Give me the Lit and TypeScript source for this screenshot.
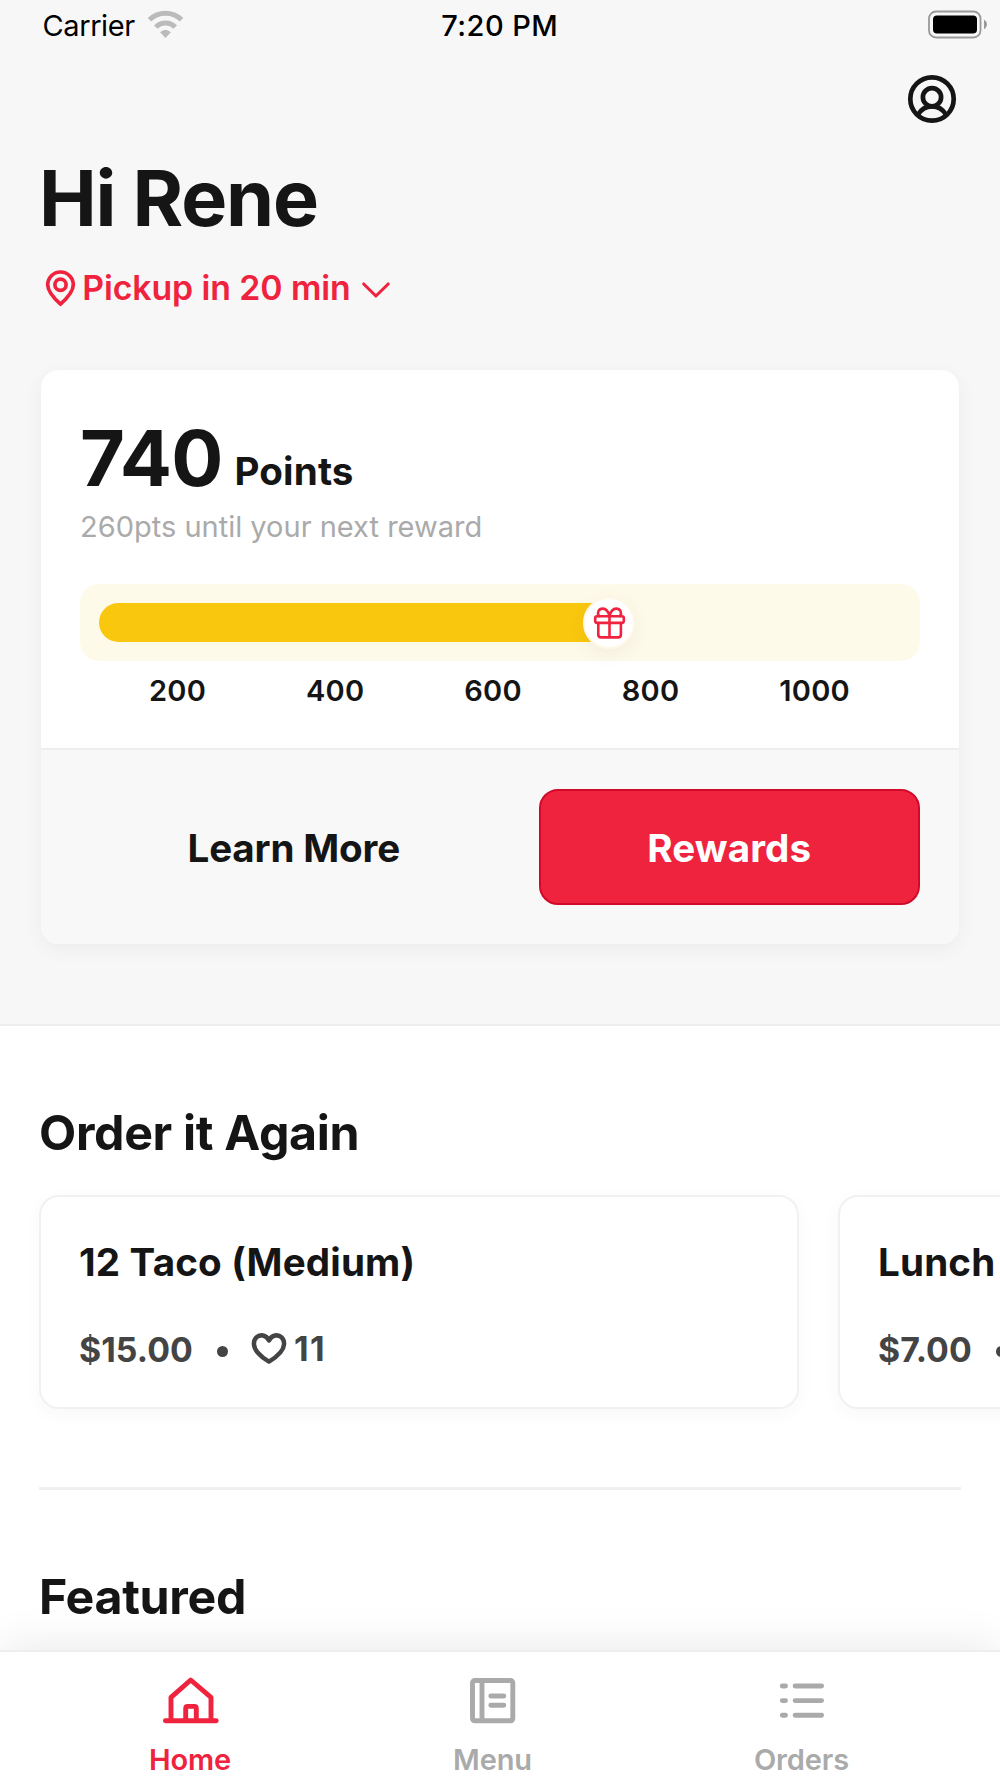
import { LitElement, html, css, svg, nothing } from "lit";
import { customElement } from "lit/decorators.js";
import { classMap } from "lit/directives/class-map.js";

interface Order {
  name: string;
  price: string;
  likes?: number;
}

const orders: Order[] = [
  { name: "12 Taco (Medium)", price: "$15.00", likes: 11 },
  { name: "Lunch", price: "$7.00" },
];

const steps = [200, 400, 600, 800, 1000];

const homeIcon = svg`
  <path d="M11 50V27.4L30.7 10L51 27.4V50M25.7 50V38.4Q25.7 36.4 27.7 36.4H34.3Q36.3 36.4 36.3 38.4V50"/>
  <path d="M5.4 50.7H56.2"/>`;

const menuIcon = svg`
  <rect x="12.5" y="10.5" width="40.3" height="40.3" rx="2.2"/>
  <path d="M22 10.5V50.5"/>
  <path d="M30.8 26H43.8M30.8 35.3H43.8"/>`;

const ordersIcon = svg`
  <path d="M12.2 16H15.4M25 16H51.5M12.2 30.6H15.4M25 30.6H51.5M12.2 45.2H15.4M25 45.2H51.5"/>`;

const tabs = [
  { label: "Home", icon: homeIcon, box: "0 0 61 61", active: true },
  { label: "Menu", icon: menuIcon, box: "2 0 61 61", active: false },
  { label: "Orders", icon: ordersIcon, box: "0.9 0 61 61", active: false },
];

@customElement("app-root")
export class AppRoot extends LitElement {
  static styles = css`
    :host {
      display: block;
      font-family: Inter, "Liberation Sans", sans-serif;
      color: #151515;
    }
    * {
      box-sizing: border-box;
    }
    svg {
      display: block;
      flex: none;
      fill: none;
      overflow: visible;
      stroke: currentColor;
      stroke-linecap: round;
      stroke-linejoin: round;
    }
    .screen {
      display: flex;
      flex-direction: column;
      height: 1778px;
      overflow: hidden;
      background: #fff;
    }

    .hero {
      flex: none;
      height: 1026px;
      background: #f7f7f7;
      border-bottom: 2px solid #eee;
    }
    .status {
      display: grid;
      grid-template-columns: 1fr auto 1fr;
      align-items: center;
      height: 50px;
      padding: 0 12px 0 42.5px;
      color: #000;
      font-size: 29px;
      line-height: 48px;
    }
    .carrier {
      display: flex;
      align-items: center;
      gap: 12px;
      letter-spacing: -0.4px;
    }
    .carrier span,
    .clock {
      padding-top: 2px;
    }
    .wifi {
      color: #bbb;
      stroke-linecap: butt;
    }
    .clock {
      font-weight: 500;
      letter-spacing: 0.45px;
      padding-right: 31px;
    }
    .battery {
      justify-self: end;
      color: #999;
    }
    .account {
      display: flex;
      justify-content: flex-end;
      padding: 25px 44px 0 0;
    }
    .greeting {
      margin: 0;
      padding: 26px 0 0 39px;
      font-size: 77.3px;
      line-height: 98px;
      font-weight: 700;
      letter-spacing: -1.15px;
    }
    .pickup {
      display: flex;
      align-items: center;
      height: 84px;
      padding-left: 44px;
      color: #f0233f;
      font-size: 33.8px;
      line-height: 40px;
      font-weight: 600;
      letter-spacing: -0.09px;
    }
    .pickup svg {
      margin-bottom: 1px;
    }
    .pickup span {
      padding: 0 11.5px 2px 5.3px;
    }

    .card {
      display: flex;
      flex-direction: column;
      height: 574px;
      margin: 39px 41px 0;
      border-radius: 18px;
      background: #fff;
      box-shadow: 0 5px 20px rgba(0, 0, 0, 0.05);
    }
    .points {
      height: 378px;
      padding: 39px 39px 0;
    }
    .score {
      display: flex;
      align-items: baseline;
      height: 98px;
      line-height: 98px;
      font-weight: 700;
    }
    .total {
      font-size: 77.3px;
      letter-spacing: -0.8px;
    }
    .unit {
      margin-bottom: 1px;
      padding-left: 12px;
      font-size: 38.6px;
      line-height: 40px;
      letter-spacing: 0.15px;
      transform: translateY(-1px);
    }
    .hint {
      height: 40px;
      line-height: 40px;
      color: #aaa;
      font-size: 29px;
      letter-spacing: 0;
    }
    .track {
      display: flex;
      align-items: center;
      height: 77px;
      margin-top: 37px;
      padding: 0 19px;
      border-radius: 19px;
      background: #fefaea;
    }
    .fill {
      height: 39px;
      border-radius: 19.5px 0 0 19.5px;
      background: #fac70f;
    }
    .knob {
      display: grid;
      place-items: center;
      width: 52px;
      height: 52px;
      margin-left: -26px;
      border: 2px solid #fff8e8;
      border-radius: 50%;
      background: #fff;
      color: #f0233f;
      box-shadow: 0 5px 20px rgba(0, 0, 0, 0.05);
    }
    .steps {
      display: flex;
      justify-content: space-between;
      padding: 10px 70px 0 69px;
      font-size: 29px;
      line-height: 40px;
      font-weight: 600;
      letter-spacing: 0.25px;
    }
    .actions {
      display: grid;
      grid-template-columns: 1fr 381.5px;
      gap: 30px;
      flex: 1;
      padding: 39px 39px 39px 38px;
      background: #f8f8f8;
      border-top: 2px solid #eee;
      border-radius: 0 0 18px 18px;
    }
    .button {
      display: grid;
      place-items: center;
      height: 116px;
      border: 2px solid transparent;
      border-radius: 19px;
      background: transparent;
      font: inherit;
      color: inherit;
      padding: 2px 0 0;
      font-size: 38.6px;
      font-weight: 700;
      letter-spacing: -0.16px;
    }
    .primary {
      border-color: #d20a2a;
      background: #f0233f;
      color: #fff;
      letter-spacing: 0.15px;
    }

    .content {
      flex: 1;
      min-height: 0;
      overflow: hidden;
    }
    .heading {
      margin: 0;
      padding: 77px 0 0 39px;
      font-size: 48.3px;
      line-height: 60px;
      font-weight: 700;
      letter-spacing: -0.33px;
    }
    .carousel {
      display: flex;
      gap: 39px;
      padding: 32px 39px 78px;
    }
    .order {
      flex: none;
      width: 760px;
      height: 214px;
      padding: 42px 38px 0;
      border: 2px solid #f1f1f1;
      border-radius: 20px;
      background: #fff;
      box-shadow: 0 5px 20px rgba(0, 0, 0, 0.03);
    }
    .name {
      font-size: 38.6px;
      line-height: 46px;
      font-weight: 700;
      letter-spacing: 0.16px;
    }
    .meta {
      display: flex;
      align-items: center;
      height: 40px;
      margin-top: 44px;
      color: #444;
      font-size: 33.8px;
      line-height: 40px;
      font-weight: 700;
    }
    .price {
      padding-top: 2px;
      letter-spacing: 0.08px;
    }
    .dot {
      width: 11px;
      height: 11px;
      margin: 4px 23.5px 0 24px;
      border-radius: 50%;
      background: currentColor;
    }
    .likes {
      padding-left: 6.5px;
      letter-spacing: 1.5px;
    }
    .rule {
      height: 3px;
      margin: 0 39px;
      background: #f0f0f0;
    }

    .tabbar {
      position: relative;
      display: flex;
      justify-content: space-between;
      flex: none;
      height: 128px;
      padding: 18px 151px 0 149px;
      border-top: 2px solid #eee;
      background: #fff;
      box-shadow: 0 0 48px rgba(0, 0, 0, 0.1);
    }
    .tab {
      display: flex;
      flex-direction: column;
      align-items: center;
      color: #aaa;
      font-size: 29px;
      line-height: 40px;
      font-weight: 600;
      letter-spacing: -0.13px;
    }
    .tab svg {
      margin-bottom: 8.5px;
    }
    .active {
      color: #f0233f;
    }
  `;

  private status() {
    return html`
      <div class="status">
        <div class="carrier">
          <span>Carrier</span>
          <svg class="wifi" width="37" height="28" viewBox="146.5 10.3 37 28" stroke-width="5">
            <path d="M149 19A23 23 0 0 1 181 19M155.3 26.4A13.3 13.3 0 0 1 174.7 26.4" />
            <path d="M159.6 31.6Q165 26.6 170.4 31.6L165 37.2Z" fill="currentColor" stroke="none" />
          </svg>
        </div>
        <span class="clock">7:20 PM</span>
        <svg class="battery" width="60" height="28" viewBox="0 0.5 60 28">
          <rect x="1" y="1" width="51.5" height="26" rx="7" stroke-width="1.8" />
          <rect x="5" y="5" width="44" height="18" rx="4" fill="#000" stroke="none" />
          <path d="M56 9Q59 11 59 14T56 19Z" fill="currentColor" stroke="none" />
        </svg>
      </div>
    `;
  }

  private points() {
    return html`
      <div class="points">
        <div class="score">
          <span class="total">740</span><span class="unit">Points</span>
        </div>
        <div class="hint">260pts until your next reward</div>
        <div class="track">
          <div class="fill" style="width: 510px"></div>
          <div class="knob">
            <svg width="32" height="32" viewBox="593 607 32 32" stroke-width="2.6">
              <rect x="595.2" y="616.3" width="28.6" height="6.6" rx="1.8" />
              <path d="M598.3 623V634.4Q598.3 637.4 601.3 637.4H617.9Q620.9 637.4 620.9 634.4V623M609.5 616.3V637.4" />
              <path d="M609.5 616.3C608.4 611.5 606 608.6 602.8 608.6C598.6 608.6 596.8 612.6 598.9 616.1M609.5 616.3C610.6 611.5 613 608.6 616.2 608.6C620.4 608.6 622.2 612.6 620.1 616.1" />
            </svg>
          </div>
        </div>
        <div class="steps">${steps.map((n) => html`<span>${n}</span>`)}</div>
      </div>
    `;
  }

  private order(o: Order) {
    return html`
      <div class="order">
        <div class="name">${o.name}</div>
        <div class="meta">
          <span class="price">${o.price}</span>
          <span class="dot"></span>
          ${o.likes === undefined
            ? nothing
            : html`
                <svg width="36" height="32" viewBox="1 3 36 32" stroke-width="4.5">
                  <path d="M19 10.4C16.2 4.9 10 4 6.4 7.4C2.7 11 3.2 17.4 7.6 22.4C11.2 26.6 15.4 29.6 19 31.6C22.6 29.6 26.8 26.6 30.4 22.4C34.8 17.4 35.3 11 31.6 7.4C28 4 21.8 4.9 19 10.4Z" />
                </svg>
                <span class="likes">${o.likes}</span>
              `}
        </div>
      </div>
    `;
  }

  render() {
    return html`
      <div class="screen">
        <header class="hero">
          ${this.status()}
          <div class="account">
            <svg width="48" height="48" viewBox="0 0 48 48" stroke-width="4.7">
              <circle cx="24" cy="24" r="21.7" />
              <circle cx="24" cy="22.2" r="9.1" />
              <path d="M10.2 39.4C13 34.6 18 31.3 24 31.3S35 34.6 37.8 39.4" />
            </svg>
          </div>
          <h1 class="greeting">Hi Rene</h1>
          <div class="pickup">
            <svg width="33" height="37" viewBox="44 270 33 37" stroke-width="3.7">
              <path d="M60.5 304.2C54.5 298.8 47.7 292.2 47.7 284.8A12.8 12.8 0 0 1 73.3 284.8C73.3 292.2 66.5 298.8 60.5 304.2Z" />
              <circle cx="60.5" cy="284.8" r="5.6" />
            </svg>
            <span>Pickup in 20 min</span>
            <svg width="28" height="16" viewBox="362.3 281.6 28 16" stroke-width="3.1">
              <path d="M364 284.6L376.2 296.6L388.5 284.6" />
            </svg>
          </div>
          <div class="card">
            ${this.points()}
            <div class="actions">
              <button class="button">Learn More</button>
              <button class="button primary">Rewards</button>
            </div>
          </div>
        </header>
        <main class="content">
          <h2 class="heading">Order it Again</h2>
          <div class="carousel">${orders.map((o) => this.order(o))}</div>
          <div class="rule"></div>
          <h2 class="heading">Featured</h2>
        </main>
        <nav class="tabbar">
          ${tabs.map(
            (t) => html`
              <div class=${classMap({ tab: true, active: t.active })}>
                <svg width="61" height="61" viewBox=${t.box} stroke-width="4.9">${t.icon}</svg>
                <span>${t.label}</span>
              </div>
            `
          )}
        </nav>
      </div>
    `;
  }
}
